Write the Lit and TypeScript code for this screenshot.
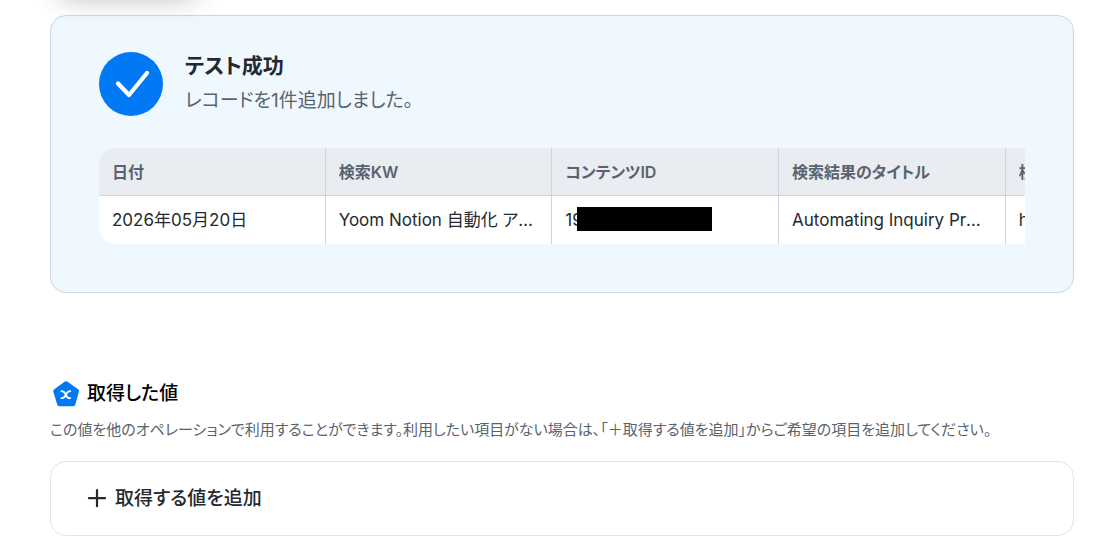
import { LitElement, html, css } from "lit";
import { customElement, property } from "lit/decorators.js";

interface Column {
  label: string;
  value: string;
  masked?: boolean;
}

const COLUMNS: Column[] = [
  { label: "日付", value: "2026年05月20日" },
  { label: "検索KW", value: "Yoom Notion 自動化 アプリ連携" },
  { label: "コンテンツID", value: "19", masked: true },
  { label: "検索結果のタイトル", value: "Automating Inquiry Processing" },
  { label: "検索結果のURL", value: "https://" },
];

@customElement("record-table")
class RecordTable extends LitElement {
  @property({ attribute: false }) columns: Column[] = [];

  static styles = css`
    :host {
      display: block;
      overflow: hidden;
      border-radius: 16px 0 0 16px;
    }
    .table {
      width: 122.4%;
      table-layout: fixed;
      border-collapse: separate;
      border-spacing: 0;
      line-height: 24px;
      background: #fff;
    }
    .head,
    .cell {
      box-sizing: border-box;
      height: 48px;
      padding: 0 14px 0 13px;
      border-right: 1px solid #ced4dc;
      text-align: left;
      white-space: nowrap;
      overflow: hidden;
      text-overflow: ellipsis;
    }
    .head {
      background: #e9ecf1;
      border-bottom: 1px solid #ced4dc;
      color: #59636f;
      font-size: 16px;
      font-weight: 600;
    }
    .cell {
      color: #24292f;
      font-size: 17px;
    }
    .masked {
      display: flex;
      align-items: center;
      height: 26px;
      overflow: hidden;
    }
    .mask {
      width: 135px;
      height: 24px;
      margin: 0 0 2px -6px;
      background: #000;
      position: relative;
    }
  `;

  render() {
    return html`
      <table class="table">
        <thead>
          <tr>
            ${this.columns.map((c) => html`<th class="head" scope="col">${c.label}</th>`)}
          </tr>
        </thead>
        <tbody>
          <tr>
            ${this.columns.map((c) =>
              c.masked
                ? html`<td class="cell">
                    <div class="masked"><span>${c.value}</span><span class="mask"></span></div>
                  </td>`
                : html`<td class="cell">${c.value}</td>`
            )}
          </tr>
        </tbody>
      </table>
    `;
  }
}

@customElement("app-root")
class AppRoot extends LitElement {
  static styles = css`
    :host {
      display: block;
      position: relative;
      overflow: hidden;
      padding: 15px 24px 16px 50px;
      background: #fff;
      color: #24292f;
      font-family: Inter, "Noto Sans CJK JP", sans-serif;
      font-feature-settings: "palt";
    }
    .floating {
      position: absolute;
      left: 58px;
      top: -48px;
      width: 140px;
      height: 48px;
      border-radius: 12px;
      box-shadow: 0 0 24px rgba(36, 48, 51, 0.28);
    }
    .result {
      padding: 36px 48px 48px;
      border: 1px solid #ccd6e0;
      border-radius: 16px;
      background: #eff7ff;
    }
    .summary {
      display: flex;
      align-items: flex-start;
      gap: 22px;
      margin-bottom: 32px;
    }
    .check {
      flex: none;
      width: 64px;
      height: 64px;
    }
    .heading {
      margin: 0;
      font-size: 21px;
      line-height: 28px;
      font-weight: 600;
    }
    .message {
      margin: 7px 0 0;
      font-size: 19px;
      line-height: 28px;
      color: #59636f;
    }
    .values {
      margin-top: 86px;
    }
    .title-row {
      display: flex;
      align-items: center;
      gap: 7px;
    }
    .badge {
      width: 30px;
      height: 30px;
    }
    .title {
      margin: 0;
      font-size: 19px;
      line-height: 28px;
      font-weight: 500;
      color: #000;
    }
    .note {
      margin: 9px 0 19px;
      font-size: 15px;
      line-height: 24px;
      color: #59636f;
    }
    .add {
      box-sizing: border-box;
      display: flex;
      align-items: center;
      gap: 8px;
      width: 100%;
      padding: 22px 36px;
      border: 1px solid #e2e4e7;
      border-radius: 16px;
      background: #fff;
      color: #24292f;
      font: inherit;
      font-feature-settings: inherit;
      font-size: 19px;
      line-height: 29px;
      font-weight: 500;
      text-align: left;
      cursor: pointer;
    }
    .plus {
      width: 20px;
      height: 20px;
    }
  `;

  render() {
    return html`
      <div class="floating"></div>
      <section class="result">
        <div class="summary">
          <svg class="check" viewBox="0 0 64 64" aria-hidden="true">
            <circle cx="32" cy="32" r="32" fill="#0279f4" />
            <path
              d="M19 31.5 30 43 48 21"
              fill="none"
              stroke="#fff"
              stroke-width="4.2"
              stroke-linecap="round"
              stroke-linejoin="round"
            />
          </svg>
          <div>
            <h2 class="heading">テスト成功</h2>
            <p class="message">レコードを1件追加しました。</p>
          </div>
        </div>
        <record-table .columns=${COLUMNS}></record-table>
      </section>

      <section class="values">
        <div class="title-row">
          <svg class="badge" viewBox="0 0 30 30" aria-hidden="true">
            <path
              d="M16 4.2 27 12 23.3 25.2H9.2L5.200 12Z"
              fill="#0279f4"
              stroke="#0279f4"
              stroke-width="4"
              stroke-linejoin="round"
            />
            <path
              d="M11.400 12.100c3.200-.2 3.600 1.700 4.400 3.700.8 2 1.600 3.400 4.400 3.300M20.200 12.100c-2.400-.1-3.400 1.700-4.400 3.700-1 2-2 3.500-4.400 3.300"
              fill="none"
              stroke="#fff"
              stroke-width="1.900"
              stroke-linecap="round"
              stroke-linejoin="round"
            />
          </svg>
          <h2 class="title">取得した値</h2>
        </div>
        <p class="note">
          この値を他のオペレーションで利用することができます。利用したい項目がない場合は、「＋取得する値を追加」からご希望の項目を追加してください。
        </p>
        <button class="add" type="button">
          <svg class="plus" viewBox="0 0 20 20" aria-hidden="true">
            <path d="M10 1.200v16M2 9.200h16" stroke="#24292f" stroke-width="2.200" stroke-linecap="round" />
          </svg>
          取得する値を追加
        </button>
      </section>
    `;
  }
}
